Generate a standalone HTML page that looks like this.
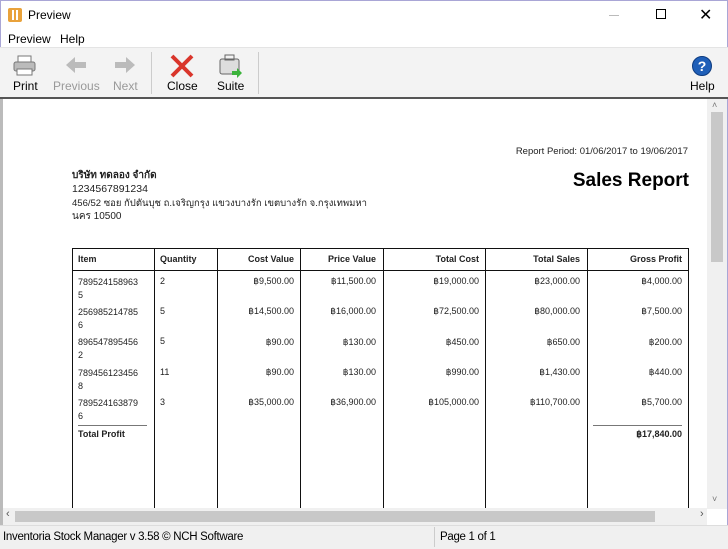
<!DOCTYPE html>
<html><head><meta charset="utf-8"><style>
*{margin:0;padding:0;box-sizing:border-box}
body{width:728px;height:549px;overflow:hidden;background:#fff;font-family:"Liberation Sans","Noto Sans CJK SC",sans-serif;position:relative;color:#000}
.a{position:absolute;white-space:nowrap}
.ui{font-size:12px;color:#000}
.t{font-size:9px;color:#222}
.b{font-weight:bold}
.r{text-align:right}
.vl{position:absolute;top:248px;bottom:41px;width:1px;background:#111}
</style></head><body>
<div class="a" style="left:0;top:0;width:728px;height:549px;border:1px solid #a9a6d6"></div>
<div class="a" style="left:8px;top:8px;width:14px;height:14px;background:#e9a23b;border-radius:2px"></div>
<div class="a" style="left:12px;top:10px;width:6px;height:10px;border-left:2px solid #fff;border-right:2px solid #fff"></div>
<div class="a ui" style="left:28px;top:8px">Preview</div>
<div class="a" style="left:609px;top:15px;width:10px;height:1px;background:#bbb"></div>
<div class="a" style="left:656px;top:9px;width:10px;height:10px;border:1px solid #000"></div>
<div class="a ui" style="left:699px;top:5px;font-size:16px">✕</div>
<div class="a ui" style="left:8px;top:32px">Preview</div>
<div class="a ui" style="left:60px;top:32px">Help</div>
<div class="a" style="left:0;top:47px;width:728px;height:51px;background:#f3f3f3;border-top:1px solid #e4e4e4"></div>
<svg class="a" style="left:12px;top:54px" width="26" height="24"><rect x="6" y="2" width="13" height="7" fill="#fff" stroke="#777"/><rect x="2" y="8" width="21" height="9" rx="2" fill="#bbb" stroke="#777"/><rect x="5" y="15" width="15" height="6" fill="#fff" stroke="#777"/></svg>
<div class="a ui" style="left:13px;top:79px">Print</div>
<svg class="a" style="left:64px;top:55px" width="24" height="20"><path d="M2 10 L11 2 V7 H22 V13 H11 V18 Z" fill="#bbb"/></svg>
<div class="a ui" style="left:53px;top:79px;color:#999">Previous</div>
<svg class="a" style="left:113px;top:55px" width="24" height="20"><path d="M22 10 L13 2 V7 H2 V13 H13 V18 Z" fill="#bbb"/></svg>
<div class="a ui" style="left:113px;top:79px;color:#999">Next</div>
<div class="a" style="left:151px;top:52px;width:1px;height:42px;background:#ccc"></div>
<svg class="a" style="left:169px;top:54px" width="26" height="24"><path d="M3 2 L23 22 M23 2 L3 22" stroke="#d9352b" stroke-width="4"/></svg>
<div class="a ui" style="left:167px;top:79px">Close</div>
<svg class="a" style="left:218px;top:53px" width="26" height="26"><rect x="2" y="6" width="19" height="15" rx="2" fill="#ddd" stroke="#666"/><rect x="7" y="2" width="9" height="5" fill="none" stroke="#666"/><path d="M14 18 h5 v-3 l5 5 l-5 5 v-3 h-5z" fill="#3bb33b"/></svg>
<div class="a ui" style="left:217px;top:79px">Suite</div>
<div class="a" style="left:258px;top:52px;width:1px;height:42px;background:#ccc"></div>
<div class="a" style="left:692px;top:56px;width:20px;height:20px;border-radius:50%;background:#1f5fb8;border:1px solid #0d3b80;color:#fff;font-weight:bold;font-size:14px;text-align:center;line-height:18px">?</div>
<div class="a ui" style="left:690px;top:79px">Help</div>
<div class="a" style="left:0;top:97px;width:728px;height:2px;background:#555"></div>
<div class="a" style="left:0;top:99px;width:3px;height:426px;background:#bbb"></div>
<div class="a t r" style="left:400px;width:288px;top:146px;font-size:9.5px">Report Period: 01/06/2017 to 19/06/2017</div>
<div class="a b r" style="left:500px;width:189px;top:170px;font-size:19px">Sales Report</div>
<div class="a t b" style="left:72px;top:168px;font-size:10px">บริษัท ทดลอง จำกัด</div>
<div class="a t" style="left:72px;top:183px;font-size:10.5px">1234567891234</div>
<div class="a t" style="left:72px;top:196px;font-size:9.5px">456/52 ซอย กัปตันบุช ถ.เจริญกรุง แขวงบางรัก เขตบางรัก จ.กรุงเทพมหา</div>
<div class="a t" style="left:72px;top:209px;font-size:10px">นคร 10500</div>
<div class="a" style="left:72px;top:248px;width:617px;height:1px;background:#111"></div>
<div class="a" style="left:72px;top:270px;width:617px;height:1px;background:#111"></div>
<div class="vl" style="left:72px"></div><div class="vl" style="left:154px"></div><div class="vl" style="left:217px"></div><div class="vl" style="left:300px"></div><div class="vl" style="left:383px"></div><div class="vl" style="left:485px"></div><div class="vl" style="left:587px"></div><div class="vl" style="left:688px"></div>
<div class="a t b" style="left:78px;top:254px">Item</div>
<div class="a t b" style="left:160px;top:254px">Quantity</div>
<div class="a t b r" style="left:217px;width:77px;top:254px">Cost Value</div>
<div class="a t b r" style="left:300px;width:76px;top:254px">Price Value</div>
<div class="a t b r" style="left:383px;width:96px;top:254px">Total Cost</div>
<div class="a t b r" style="left:485px;width:95px;top:254px">Total Sales</div>
<div class="a t b r" style="left:587px;width:95px;top:254px">Gross Profit</div>
<div class="a t" style="left:78px;top:276px;line-height:12.5px">789524158963<br>5</div>
<div class="a t" style="left:78px;top:306px;line-height:12.5px">256985214785<br>6</div>
<div class="a t" style="left:78px;top:336px;line-height:12.5px">896547895456<br>2</div>
<div class="a t" style="left:78px;top:367px;line-height:12.5px">789456123456<br>8</div>
<div class="a t" style="left:78px;top:397px;line-height:12.5px">789524163879<br>6</div>
<div class="a t" style="left:160px;top:276px">2</div><div class="a t" style="left:160px;top:306px">5</div><div class="a t" style="left:160px;top:336px">5</div><div class="a t" style="left:160px;top:367px">11</div><div class="a t" style="left:160px;top:397px">3</div>
<div class="a t r" style="left:217px;width:77px;top:266px;line-height:30.3px">฿9,500.00<br>฿14,500.00<br>฿90.00<br>฿90.00<br>฿35,000.00</div>
<div class="a t r" style="left:300px;width:76px;top:266px;line-height:30.3px">฿11,500.00<br>฿16,000.00<br>฿130.00<br>฿130.00<br>฿36,900.00</div>
<div class="a t r" style="left:383px;width:96px;top:266px;line-height:30.3px">฿19,000.00<br>฿72,500.00<br>฿450.00<br>฿990.00<br>฿105,000.00</div>
<div class="a t r" style="left:485px;width:95px;top:266px;line-height:30.3px">฿23,000.00<br>฿80,000.00<br>฿650.00<br>฿1,430.00<br>฿110,700.00</div>
<div class="a t r" style="left:587px;width:95px;top:266px;line-height:30.3px">฿4,000.00<br>฿7,500.00<br>฿200.00<br>฿440.00<br>฿5,700.00</div>
<div class="a" style="left:78px;top:425px;width:69px;height:1px;background:#777"></div>
<div class="a" style="left:593px;top:425px;width:89px;height:1px;background:#777"></div>
<div class="a t b" style="left:78px;top:429px">Total Profit</div>
<div class="a t b r" style="left:587px;width:95px;top:429px">฿17,840.00</div>
<div class="a" style="left:707px;top:99px;width:20px;height:410px;background:#f0f0f0"></div>
<div class="a" style="left:711px;top:112px;width:12px;height:150px;background:#c8c8c8"></div>
<div class="a" style="left:712px;top:100px;font-size:9px;color:#777">˄</div>
<div class="a" style="left:712px;top:494px;font-size:9px;color:#777">˅</div>
<div class="a" style="left:3px;top:508px;width:704px;height:17px;background:#f0f0f0"></div>
<div class="a" style="left:15px;top:511px;width:640px;height:11px;background:#c8c8c8"></div>
<div class="a" style="left:6px;top:508px;font-size:11px;color:#555">‹</div>
<div class="a" style="left:700px;top:508px;font-size:11px;color:#555">›</div>
<div class="a" style="left:0;top:525px;width:728px;height:24px;background:#f0f0f0;border-top:1px solid #ddd"></div>
<div class="a" style="left:434px;top:527px;width:1px;height:20px;background:#ccc"></div>
<div class="a ui" style="left:3px;top:531px;font-size:11.5px;letter-spacing:-0.3px">Inventoria Stock Manager v 3.58 © NCH Software</div>
<div class="a ui" style="left:440px;top:531px;font-size:11.5px;letter-spacing:-0.3px">Page 1 of 1</div>
</body></html>
